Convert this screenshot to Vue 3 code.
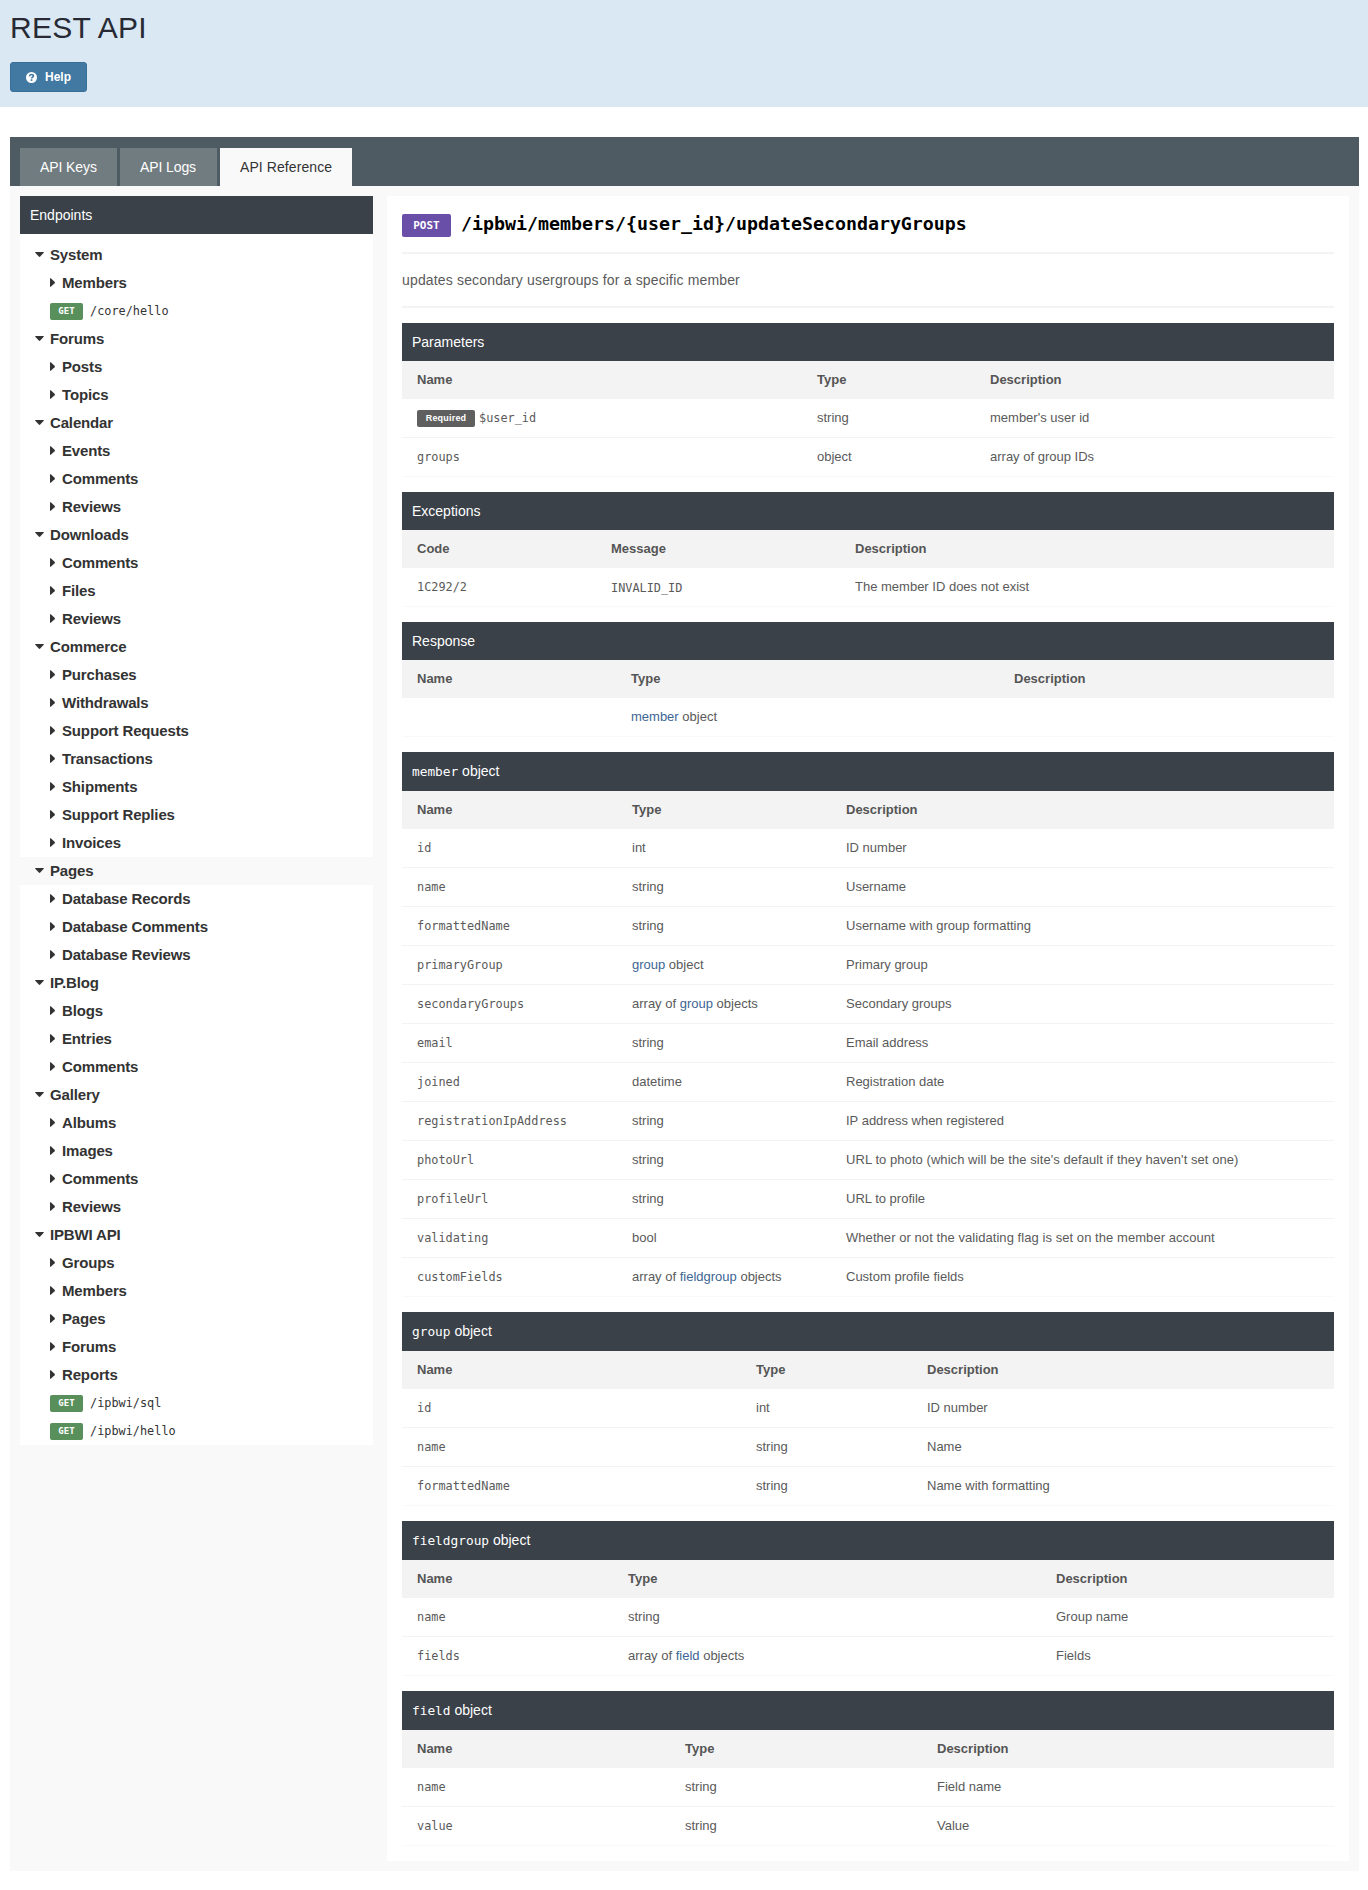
<script setup>
const tabs = [
  { label: 'API Keys', active: false },
  { label: 'API Logs', active: false },
  { label: 'API Reference', active: true },
]

const tree = [
  { name: 'System', children: ['Members'], calls: ['/core/hello'] },
  { name: 'Forums', children: ['Posts', 'Topics'] },
  { name: 'Calendar', children: ['Events', 'Comments', 'Reviews'] },
  { name: 'Downloads', children: ['Comments', 'Files', 'Reviews'] },
  {
    name: 'Commerce',
    children: ['Purchases', 'Withdrawals', 'Support Requests', 'Transactions', 'Shipments', 'Support Replies', 'Invoices'],
  },
  { name: 'Pages', hover: true, children: ['Database Records', 'Database Comments', 'Database Reviews'] },
  { name: 'IP.Blog', children: ['Blogs', 'Entries', 'Comments'] },
  { name: 'Gallery', children: ['Albums', 'Images', 'Comments', 'Reviews'] },
  {
    name: 'IPBWI API',
    children: ['Groups', 'Members', 'Pages', 'Forums', 'Reports'],
    calls: ['/ipbwi/sql', '/ipbwi/hello'],
  },
]

// A type is a triple: text before the link, the linked name, text after it.
const plain = (text) => [text, '', '']
const NTD = ['Name', 'Type', 'Description']

const sections = [
  {
    title: 'Parameters',
    heads: NTD,
    widths: [400, 173],
    rows: [
      { name: '$user_id', required: true, type: plain('string'), text: "member's user id" },
      { name: 'groups', type: plain('object'), text: 'array of group IDs' },
    ],
  },
  {
    title: 'Exceptions',
    heads: ['Code', 'Message', 'Description'],
    widths: [194, 244],
    rows: [{ name: '1C292/2', type: plain('INVALID_ID'), mono: true, text: 'The member ID does not exist' }],
  },
  {
    title: 'Response',
    heads: NTD,
    widths: [214, 383],
    rows: [{ name: '', type: ['', 'member', ' object'], text: '' }],
  },
  {
    object: 'member',
    heads: NTD,
    widths: [215, 214],
    rows: [
      { name: 'id', type: plain('int'), text: 'ID number' },
      { name: 'name', type: plain('string'), text: 'Username' },
      { name: 'formattedName', type: plain('string'), text: 'Username with group formatting' },
      { name: 'primaryGroup', type: ['', 'group', ' object'], text: 'Primary group' },
      { name: 'secondaryGroups', type: ['array of ', 'group', ' objects'], text: 'Secondary groups' },
      { name: 'email', type: plain('string'), text: 'Email address' },
      { name: 'joined', type: plain('datetime'), text: 'Registration date' },
      { name: 'registrationIpAddress', type: plain('string'), text: 'IP address when registered' },
      { name: 'photoUrl', type: plain('string'), text: "URL to photo (which will be the site's default if they haven't set one)", wide: true },
      { name: 'profileUrl', type: plain('string'), text: 'URL to profile' },
      { name: 'validating', type: plain('bool'), text: 'Whether or not the validating flag is set on the member account', wide: true },
      { name: 'customFields', type: ['array of ', 'fieldgroup', ' objects'], text: 'Custom profile fields' },
    ],
  },
  {
    object: 'group',
    heads: NTD,
    widths: [339, 171],
    rows: [
      { name: 'id', type: plain('int'), text: 'ID number' },
      { name: 'name', type: plain('string'), text: 'Name' },
      { name: 'formattedName', type: plain('string'), text: 'Name with formatting' },
    ],
  },
  {
    object: 'fieldgroup',
    heads: NTD,
    widths: [211, 428],
    rows: [
      { name: 'name', type: plain('string'), text: 'Group name' },
      { name: 'fields', type: ['array of ', 'field', ' objects'], text: 'Fields' },
    ],
  },
  {
    object: 'field',
    heads: NTD,
    widths: [268, 252],
    rows: [
      { name: 'name', type: plain('string'), text: 'Field name' },
      { name: 'value', type: plain('string'), text: 'Value' },
    ],
  },
]
</script>

<template>
  <div class="page">
    <header class="page-header">
      <h1>REST API</h1>
      <button class="help" type="button">
        <svg width="11" height="11" viewBox="0 0 11 11">
          <circle cx="5.5" cy="5.5" r="5.5" fill="#fff" />
          <path d="M3.5 4.3C3.7 3 4.5 2.5 5.5 2.5c1.2 0 1.9.6 1.9 1.4 0 1.2-1.8 1.2-1.8 2.6" fill="none" stroke="#4179a3" stroke-width="1.6" />
          <rect x="4.7" y="7.3" width="1.7" height="1.6" fill="#4179a3" />
        </svg>
        <span>Help</span>
      </button>
    </header>

    <div class="panel">
      <nav class="tabs">
        <a v-for="tab in tabs" :key="tab.label" class="tab" :class="{ active: tab.active }">{{ tab.label }}</a>
      </nav>

      <div class="columns">
        <aside class="sidebar">
          <h2 class="bar">Endpoints</h2>
          <div class="tree">
            <template v-for="group in tree" :key="group.name">
              <div class="node parent" :class="{ hover: group.hover }">
                <svg width="9" height="5" viewBox="0 0 9 5"><path d="M.5 0h8q.6.2.2.8L5.2 4.6q-.7.6-1.4 0L.3.8Q-.1.2.5 0z" /></svg>
                <span>{{ group.name }}</span>
              </div>
              <div v-for="child in group.children" :key="child" class="node child">
                <svg width="5" height="9" viewBox="0 0 5 9"><path d="M0 .5q.2-.6.8-.2l3.8 3.5q.6.7 0 1.4L.8 8.7Q.2 9.1 0 8.5z" /></svg>
                <span>{{ child }}</span>
              </div>
              <div v-for="call in group.calls" :key="call" class="node call">
                <span class="get">GET</span>
                <code>{{ call }}</code>
              </div>
            </template>
          </div>
        </aside>

        <main class="content">
          <div class="endpoint">
            <span class="post">POST</span>
            <h2>/ipbwi/members/{user_id}/updateSecondaryGroups</h2>
          </div>
          <p class="summary">updates secondary usergroups for a specific member</p>

          <section v-for="section in sections" :key="section.title || section.object" class="section">
            <h3 class="bar" :class="{ object: section.object }">
              <template v-if="section.object"><code>{{ section.object }}</code>&nbsp;object</template>
              <template v-else>{{ section.title }}</template>
            </h3>
            <table>
              <colgroup>
                <col v-for="(w, i) in section.widths" :key="i" :style="{ width: w + 'px' }" />
                <col />
              </colgroup>
              <thead>
                <tr>
                  <th v-for="head in section.heads" :key="head">{{ head }}</th>
                </tr>
              </thead>
              <tbody>
                <tr v-for="row in section.rows" :key="row.name">
                  <td class="key">
                    <div class="name"><span v-if="row.required" class="required">Required</span><code>{{ row.name }}</code></div>
                  </td>
                  <td :class="{ key: row.mono }">
                    <code v-if="row.mono">{{ row.type[0] }}</code>
                    <span v-else>{{ row.type[0] }}<a v-if="row.type[1]">{{ row.type[1] }}</a>{{ row.type[2] }}</span>
                  </td>
                  <td :class="{ wide: row.wide }">{{ row.text }}</td>
                </tr>
              </tbody>
            </table>
          </section>
        </main>
      </div>
    </div>
  </div>
</template>

<style>
body {
  margin: 0;
  background: #fff;
}
</style>

<style scoped>
.page {
  min-height: 1890px;
  font-family: 'Liberation Sans', Arial, sans-serif;
  font-size: 13px;
  color: #5a5a5a;
}
h1, h2, h3, p {
  margin: 0;
  font-weight: 400;
}
code {
  font-family: 'DejaVu Sans Mono', monospace;
  font-size: 11.87px;
  letter-spacing: 0;
}

.page-header {
  box-sizing: border-box;
  height: 107px;
  padding: 10px 10px 0;
  background: #dae8f3;
}
h1 {
  height: 52px;
  font-size: 30px;
  line-height: 36px;
  letter-spacing: 0.3px;
  color: #272a34;
}
.help {
  display: flex;
  align-items: center;
  gap: 8px;
  box-sizing: border-box;
  width: 77px;
  height: 30px;
  padding: 0 0 0 15px;
  border: 1px solid #386f99;
  border-radius: 3px;
  background: #4179a3;
  color: #fff;
  font: 700 12px/28px 'Liberation Sans', Arial, sans-serif;
}

.panel {
  margin: 30px 9px 0 10px;
  background: #f9f9f9;
}
.tabs {
  display: flex;
  gap: 3px;
  height: 38px;
  padding: 11px 10px 0;
  background: #4f5b63;
}
.tab {
  box-sizing: border-box;
  width: 97px;
  padding-left: 20px;
  background: #717c80;
  color: #fff;
  font-size: 14px;
  line-height: 38px;
  letter-spacing: -0.1px;
  white-space: nowrap;
}
.tab.active {
  width: 132px;
  background: #f9f9f9;
  color: #333;
  letter-spacing: 0.08px;
}
.columns {
  display: flex;
  align-items: flex-start;
  gap: 14px;
  padding: 10px;
}

.bar {
  height: 38px;
  padding: 0 10px;
  background: #3a4149;
  color: #fff;
  font-size: 14px;
  line-height: 38px;
}
.bar.object {
  height: 39px;
  line-height: 39px;
}
.bar code {
  font-size: 12.8px;
}

.sidebar {
  width: 353px;
  background: #fff;
}
.tree {
  padding-top: 7px;
}
.node {
  display: flex;
  align-items: center;
  box-sizing: border-box;
  height: 28px;
  padding-bottom: 2px;
  color: #333;
  font-size: 15px;
  font-weight: 700;
  letter-spacing: -0.15px;
}
.node.hover {
  background: #f9f9f9;
}
.parent {
  padding-left: 15px;
}
.parent svg {
  margin: 1px 6px 0 0;
}
.child {
  padding-left: 30px;
}
.child svg {
  margin: 1px 7px 0 0;
}
.node svg {
  fill: #333;
}
.call {
  gap: 7px;
  padding-bottom: 0;
  padding-left: 30px;
  font-weight: 400;
}
.get {
  width: 33px;
  height: 17px;
  border-radius: 2px;
  background: #598f5b;
  color: #fff;
  font: 700 9px/16px 'DejaVu Sans Mono', monospace;
  letter-spacing: 0;
  text-align: center;
}

.content {
  box-sizing: border-box;
  width: 962px;
  padding: 0 15px 15px;
  background: #fff;
}
.endpoint {
  display: flex;
  align-items: center;
  gap: 10px;
  height: 56px;
  border-bottom: 2px solid #f3f3f3;
}
.post {
  width: 49px;
  height: 23px;
  margin-top: 2px;
  border-radius: 2px;
  background: #6a4fa9;
  color: #fff;
  font: 700 11px/23px 'DejaVu Sans Mono', monospace;
  text-align: center;
}
.endpoint h2 {
  color: #000;
  font: 700 18.27px/24px 'DejaVu Sans Mono', monospace;
}
.summary {
  height: 52px;
  border-bottom: 2px solid #f3f3f3;
  font-size: 14px;
  line-height: 52px;
  letter-spacing: 0.16px;
}

.section {
  margin-top: 15px;
}
table {
  width: 100%;
  table-layout: fixed;
  border-collapse: separate;
  border-spacing: 0;
}
th, td {
  box-sizing: border-box;
  padding: 0 0 2px 15px;
  text-align: left;
  white-space: nowrap;
}
th {
  height: 38px;
  background: #f3f3f3;
  color: #555;
}
td {
  height: 39px;
  border-bottom: 1px solid #f3f3f3;
}
td.key {
  padding-bottom: 0;
}
td.wide {
  letter-spacing: 0.06px;
}
tr:last-child td {
  border-bottom-color: #f9f9f9;
}
td a {
  color: #3d6594;
}
.name {
  display: flex;
  align-items: center;
  gap: 4px;
}
.required {
  width: 58px;
  height: 17px;
  border-radius: 2px;
  background: #5f5f5f;
  color: #fff;
  font-size: 9px;
  font-weight: 700;
  line-height: 17px;
  letter-spacing: 0.2px;
  text-align: center;
}
</style>
